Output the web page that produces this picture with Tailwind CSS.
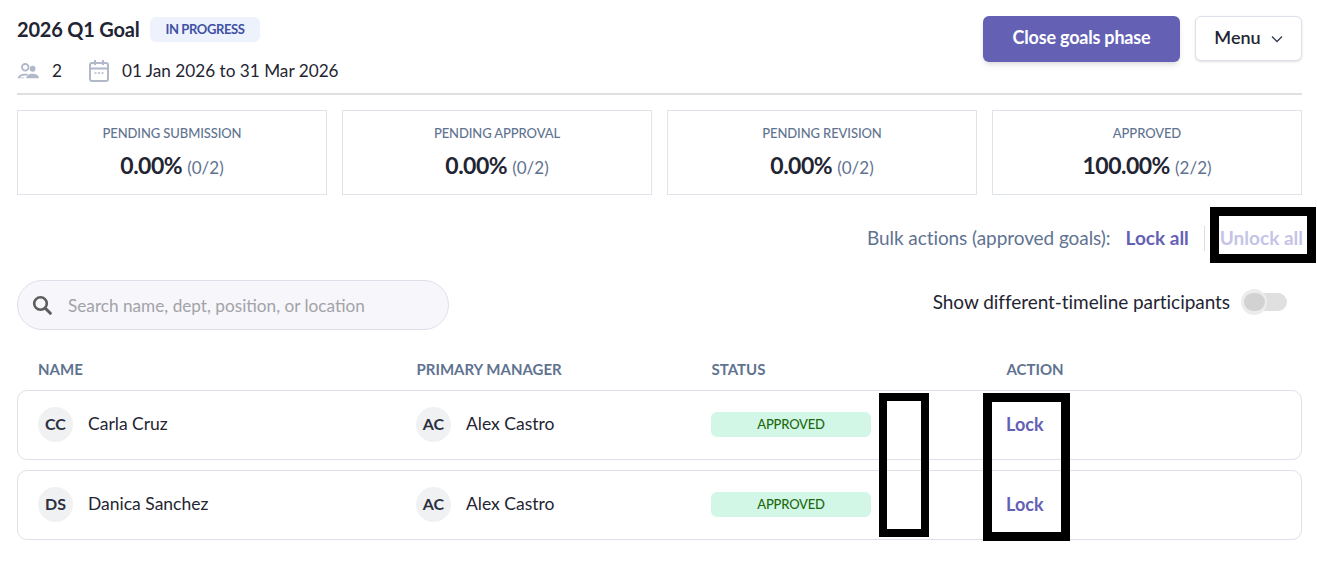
<!DOCTYPE html>
<html lang="en">
<head>
  <meta charset="UTF-8" />
  <title>2026 Q1 Goal</title>
  <script src="https://cdn.jsdelivr.net/npm/@tailwindcss/browser@4"></script>
</head>
<body class="bg-white font-['Lato',sans-serif] text-[#1f2533] relative h-[562px] overflow-hidden">
  <div class="pl-[17px] pr-[15px]">

    <!-- Header -->
    <header class="flex justify-between h-[95px] border-b-2 border-[#e0e0e0]">
      <div>
        <div class="flex items-center gap-[10px] pt-[16px]">
          <h1 class="text-[20px] leading-[26px] font-bold tracking-[-0.2px]">2026 Q1 Goal</h1>
          <span class="bg-[#eef2fd] text-[#3f51a3] text-[13px] leading-[25px] h-[25px] font-bold px-[16px] rounded-md tracking-[-0.4px]">IN PROGRESS</span>
        </div>
        <div class="flex items-center mt-[17px] text-[17.2px] leading-6">
          <svg class="w-[22px] h-[22px] mr-[13px]" viewBox="0 0 24 24" fill="#b0b8c9"><circle cx="9" cy="8" r="3.600" fill="none" stroke="#b0b8c9" stroke-width="2"/><path d="M1 20c0-3 3-5 8-5 1 0 2 .1 3 .3l-1 1.700c-.7-.1-1.300-.1-2-.1-3 0-5 .8-5.600 2.100H8V20H1z"/><circle cx="17" cy="9.500" r="3.200"/><path d="M10 20c0-3 3-5 7-5s7 2 7 5H10z"/></svg>
          <span class="w-[36px]">2</span>
          <svg class="w-[22px] h-[24px] mr-[12px]" viewBox="0 0 22 24" fill="none" stroke="#b0b8c9" stroke-width="2"><rect x="2" y="4" width="18" height="18" rx="2"/><path d="M2 9.500h18M7 1v5M15 1v5"/><path d="M6.500 14h2M10 14h2M13.500 14h2" stroke-width="1.500"/></svg>
          <span>01 Jan 2026 to 31 Mar 2026</span>
        </div>
      </div>
      <div class="flex gap-[15px] pt-[16px]">
        <button class="w-[197px] h-[46px] pb-[3px] bg-[#6461b5] text-white text-[18px] font-bold rounded-md shadow-md tracking-[-0.2px]">Close goals phase</button>
        <button class="w-[107px] h-[45px] pb-[2px] bg-white border border-[#dde1ec] rounded-md shadow-sm flex items-center justify-center gap-[10px] text-[18px] font-semibold text-[#1f2533]">
          Menu
          <svg class="w-[12px] h-[8px] mt-[3px]" viewBox="0 0 12 8" fill="none" stroke="#333b4a" stroke-width="1.300"><path d="M1 1.500l5 5 5-5"/></svg>
        </button>
      </div>
    </header>

    <!-- Summary cards -->
    <section class="grid grid-cols-4 gap-[15px] mt-[15px]">
      <div class="h-[85px] border border-[#dfe3ea] flex flex-col items-center pt-[14px]">
        <div class="text-[13px] leading-[17px] font-medium text-[#5f7391] tracking-[-0.1px]">PENDING SUBMISSION</div>
        <div class="mt-[8px] leading-[30px] text-[23px] font-bold tracking-[-0.5px]">0.00% <span class="text-[17px] font-normal text-[#5f7391] tracking-normal">(0/2)</span></div>
      </div>
      <div class="h-[85px] border border-[#dfe3ea] flex flex-col items-center pt-[14px]">
        <div class="text-[13px] leading-[17px] font-medium text-[#5f7391] tracking-[-0.1px]">PENDING APPROVAL</div>
        <div class="mt-[8px] leading-[30px] text-[23px] font-bold tracking-[-0.5px]">0.00% <span class="text-[17px] font-normal text-[#5f7391] tracking-normal">(0/2)</span></div>
      </div>
      <div class="h-[85px] border border-[#dfe3ea] flex flex-col items-center pt-[14px]">
        <div class="text-[13px] leading-[17px] font-medium text-[#5f7391] tracking-[-0.1px]">PENDING REVISION</div>
        <div class="mt-[8px] leading-[30px] text-[23px] font-bold tracking-[-0.5px]">0.00% <span class="text-[17px] font-normal text-[#5f7391] tracking-normal">(0/2)</span></div>
      </div>
      <div class="h-[85px] border border-[#dfe3ea] flex flex-col items-center pt-[14px]">
        <div class="text-[13px] leading-[17px] font-medium text-[#5f7391] tracking-[-0.1px]">APPROVED</div>
        <div class="mt-[8px] leading-[30px] text-[23px] font-bold tracking-[-0.5px]">100.00% <span class="text-[17px] font-normal text-[#5f7391] tracking-normal">(2/2)</span></div>
      </div>
    </section>

    <!-- Bulk actions -->
    <div class="flex justify-end items-center mt-[29px] h-[28px] text-[19px]">
      <span class="text-[#5f7391] tracking-[-0.07px]">Bulk actions (approved goals):</span>
      <span class="ml-[15px] font-bold text-[#6461b5]">Lock all</span>
      <span class="ml-[15px] w-px h-[25px] bg-[#dcdce4]"></span>
      <span class="ml-[15px] font-bold text-[#c5c4e6] mr-[-1px]">Unlock all</span>
    </div>

    <!-- Search + toggle -->
    <div class="flex justify-between items-center mt-[28px] h-[50px]">
      <div class="w-[432px] h-[50px] rounded-full bg-[#f6f6fb] border border-[#dfdfe9] flex items-center pl-[14px]">
        <svg class="w-[20px] h-[20px]" viewBox="0 0 20 20" fill="none" stroke="#5c5c5c"><circle cx="8.500" cy="8.500" r="6.300" stroke-width="2.600"/><path d="M13.300 13.300l5 5" stroke-width="3" stroke-linecap="round"/></svg>
        <span class="ml-[16px] mt-[1px] text-[17.2px] text-[#a3a3a8]">Search name, dept, position, or location</span>
      </div>
      <div class="flex items-center mb-[6px] pr-[15px]">
        <span class="text-[19px] text-[#1f2533] tracking-[-0.05px]">Show different-timeline participants</span>
        <div class="relative ml-[15px] w-[42px] h-[18px] rounded-full bg-[#e0e0e0]">
          <div class="absolute left-[-4px] top-[-4px] w-[26px] h-[26px] rounded-full bg-[#ececec] flex items-center justify-center">
            <div class="w-[21px] h-[18px] rounded-full bg-[#d2d2d2]"></div>
          </div>
        </div>
      </div>
    </div>

    <!-- Table -->
    <div class="grid grid-cols-[378.500px_295px_295px_1fr] pl-[21px] mt-[27px] h-[24px] items-center text-[15px] font-bold text-[#5f7391]">
      <div>NAME</div>
      <div>PRIMARY MANAGER</div>
      <div>STATUS</div>
      <div>ACTION</div>
    </div>

    <div class="mt-[9px] space-y-[10px]">
      <div class="grid grid-cols-[378px_295px_295px_1fr] items-center pl-[20px] pb-[2px] h-[70px] border border-[#dfdfe9] rounded-[10px] text-[17.500px]">
        <div class="flex items-center">
          <span class="w-[35px] h-[35px] rounded-full bg-[#f0f1f3] flex items-center justify-center text-[16px] font-bold text-[#2b3040]">CC</span>
          <span class="ml-[15px] mt-[1px]">Carla Cruz</span>
        </div>
        <div class="flex items-center">
          <span class="w-[35px] h-[35px] rounded-full bg-[#f0f1f3] flex items-center justify-center text-[16px] font-bold text-[#2b3040]">AC</span>
          <span class="ml-[15px] mt-[1px]">Alex Castro</span>
        </div>
        <div><span class="block w-[160px] h-[25px] leading-[24px] rounded-md bg-[#d2f7e7] text-center text-[13px] font-medium text-[#1f6a10] tracking-[-0.2px]">APPROVED</span></div>
        <div class="font-bold text-[#6461b5] text-[18px]">Lock</div>
      </div>
      <div class="grid grid-cols-[378px_295px_295px_1fr] items-center pl-[20px] pb-[2px] h-[70px] border border-[#dfdfe9] rounded-[10px] text-[17.500px]">
        <div class="flex items-center">
          <span class="w-[35px] h-[35px] rounded-full bg-[#f0f1f3] flex items-center justify-center text-[16px] font-bold text-[#2b3040]">DS</span>
          <span class="ml-[15px] mt-[1px]">Danica Sanchez</span>
        </div>
        <div class="flex items-center">
          <span class="w-[35px] h-[35px] rounded-full bg-[#f0f1f3] flex items-center justify-center text-[16px] font-bold text-[#2b3040]">AC</span>
          <span class="ml-[15px] mt-[1px]">Alex Castro</span>
        </div>
        <div><span class="block w-[160px] h-[25px] leading-[24px] rounded-md bg-[#d2f7e7] text-center text-[13px] font-medium text-[#1f6a10] tracking-[-0.2px]">APPROVED</span></div>
        <div class="font-bold text-[#6461b5] text-[18px]">Lock</div>
      </div>
    </div>
  </div>

  <!-- Redaction boxes drawn over the screenshot -->
  <div class="absolute left-[1210px] top-[207px] w-[106px] h-[56px] border-[9px] border-black"></div>
  <div class="absolute left-[879px] top-[393px] w-[50px] h-[144px] border-[8px] border-black"></div>
  <div class="absolute left-[983px] top-[393px] w-[87px] h-[148px] border-[9px] border-black"></div>
</body>
</html>
